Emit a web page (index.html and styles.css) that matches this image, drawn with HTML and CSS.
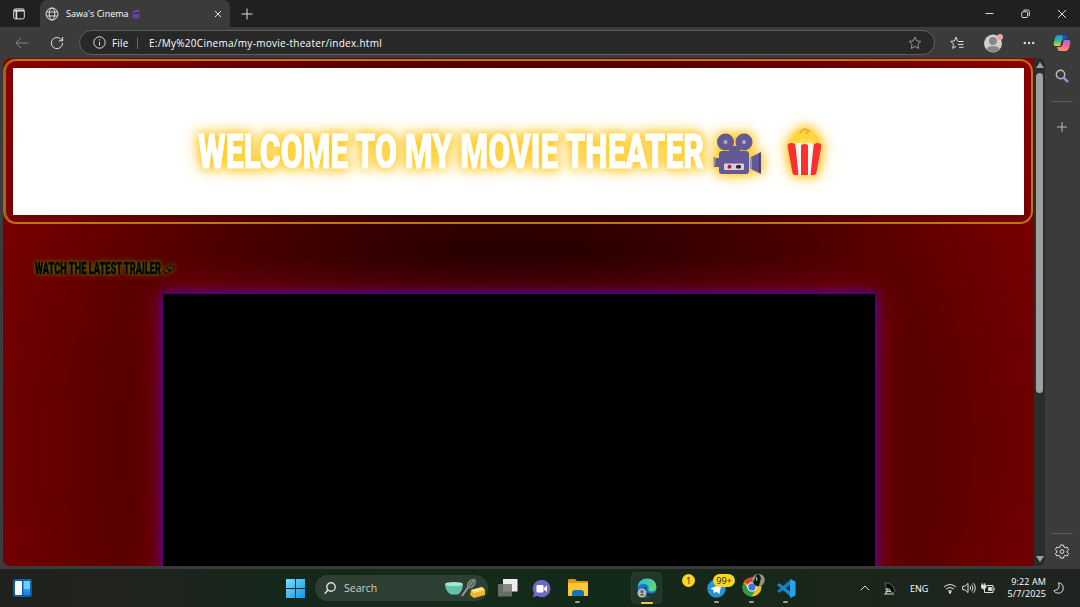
FILE: index.html
```
<!DOCTYPE html>
<html lang="en">

<head>
    <meta charset="UTF-8">
    <meta name="viewport" content="width=device-width, initial-scale=1.0">
    <title>Sawa's Cinema</title>
    <link rel="stylesheet" href="styles.css">
</head>

<body>
    <div class="titlebar">
        <svg class="workspaces" width="12" height="12" viewBox="0 0 12 12"><rect x=".7" y=".9" width="10.6" height="10" rx="1.6" class="line"/><path d="M1 2.6h10M3.4 3v8" class="line thick"/></svg>
        <div class="tab">
            <svg width="14" height="14" viewBox="0 0 14 14"><g class="line"><circle cx="7" cy="7" r="6"/><ellipse cx="7" cy="7" rx="2.8" ry="6"/><path d="M1.5 5h11M1.5 9h11"/></g></svg>
            <span class="tab-title">Sawa's Cinema</span>
            <svg class="tab-emoji" width="8" height="10" viewBox="0 0 8 10"><path d="M.5 2.5L7 .5v2L1 4z" fill="#7650a8"/><path d="M.5 3.500h7v6h-7z" fill="#65439a"/><path d="M1 4.2h6" stroke="#32215a"/></svg>
            <svg class="tab-close" width="8" height="8" viewBox="0 0 8 8"><path d="M1 1l6 6M7 1L1 7" class="line"/></svg>
        </div>
        <svg class="new-tab" width="12" height="12" viewBox="0 0 12 12"><path d="M6 .5v11M.5 6h11" class="line"/></svg>
        <div class="window-buttons">
            <svg width="9" height="10" viewBox="0 0 9 10"><path d="M.5 4.500h8" class="line"/></svg>
            <svg width="9" height="10" viewBox="0 0 9 10"><g class="line"><rect x=".8" y="2.7" width="5.8" height="5.8" rx="1"/><path d="M2.5 1h4.3Q8.3 1 8.3 2.6V7"/></g></svg>
            <svg width="10" height="10" viewBox="0 0 10 10"><path d="M1 1l8 8M9 1L1 9" class="line"/></svg>
        </div>
    </div>

    <div class="toolbar">
        <svg class="back" width="14" height="12" viewBox="0 0 14 12"><path d="M13.5 6H1M6 1L1 6l5 5" class="line"/></svg>
        <svg class="reload" width="14" height="14" viewBox="0 0 14 14"><path d="M12.5 7A5.6 5.6 0 1 1 10.6 2.9L12.5 4.6M12.6 1v3.8H8.8" class="line"/></svg>
        <div class="address">
            <svg width="13" height="13" viewBox="0 0 13 13"><circle cx="6.5" cy="6.5" r="5.7" class="line"/><path d="M6.5 5.7v3.8M6.5 3.3v1.2" class="line"/></svg>
            <span class="scheme">File</span>
            <span class="url">E:/My%20Cinema/my-movie-theater/index.html</span>
            <svg class="star" width="14" height="14" viewBox="0 0 14 14"><path d="M7 1l1.8 3.9 4.2.5-3.1 2.9.8 4.2L7 10.4l-3.7 2.1.8-4.2L1 5.4l4.2-.5z" class="line"/></svg>
        </div>
        <svg class="favorites" width="14" height="14" viewBox="0 0 14 14"><path d="M7.5 5.2L6 1 4.3 5 .8 5.3l2.7 3-.8 4L6 10.4M8 5.5h5.5M8 8.4h5.5M9 11.3h4.5" class="line"/></svg>
        <svg class="profile" width="20" height="20" viewBox="0 0 20 20"><circle cx="10" cy="10.5" r="9" fill="#d2d0ce"/><circle cx="10" cy="8" r="4" fill="#8a8886"/><path d="M3.5 16q1-3 6.5-3t6.5 3q-2.5 3-6.5 3t-6.500-3z" fill="#8a8886"/><circle cx="17" cy="4" r="3" fill="#f1a3a0"/></svg>
        <svg class="more" width="12" height="4" viewBox="0 0 12 4"><g fill="#ddd"><circle cx="1.8" cy="2" r="1.200"/><circle cx="6" cy="2" r="1.200"/><circle cx="10.200" cy="2" r="1.200"/></g></svg>
        <svg class="copilot" width="18" height="18" viewBox="0 0 18 18">
            <defs>
                <linearGradient id="copA" x1="0" y1="0" x2="0" y2="1"><stop offset="0" stop-color="#1b8fe8"/><stop offset=".55" stop-color="#35bf8f"/><stop offset="1" stop-color="#f4cf22"/></linearGradient>
                <linearGradient id="copB" x1="0" y1="0" x2="0" y2="1"><stop offset="0" stop-color="#a767ee"/><stop offset=".5" stop-color="#f0659a"/><stop offset="1" stop-color="#ff9a5a"/></linearGradient>
            </defs>
            <path d="M5 1h6q2 0 2.500 2l.5 2h-3Q9 5 8.500 7l-1.300 5H3Q0 12 .7 9L2 4q1-3 3-3z" fill="url(#copA)"/>
            <path d="M9 1h2.500q1.600 0 2.200 2l.6 2.200H10z" fill="#1b50c8"/>
            <path d="M13 17H7q-2 0-2.500-2L4 13h3q2 0 2.500-2l1.300-5H15q3 0 2.300 3L16 14q-1 3-3 3z" fill="url(#copB)"/>
        </svg>
    </div>

    <div class="browser">
        <div class="page">
            <header class="header">
                <div class="banner">
                    <svg width="1011" height="147" viewBox="0 0 1011 147">
                        <text class="headline" x="185" y="99.500" textLength="506" lengthAdjust="spacingAndGlyphs">WELCOME TO MY MOVIE THEATER</text>
                        <g class="camera">
                            <g fill="#635994">
                                <circle cx="712.500" cy="74" r="8.500"/><circle cx="731" cy="74" r="8.500"/>
                                <path d="M717 78h9l2 7h-13z"/>
                                <rect x="706" y="83" width="30" height="23" rx="3"/>
                                <path d="M738 89l10-5v22l-10-5zM701 90h5v9h-5z"/>
                            </g>
                            <path d="M701.500 89v9M738 90v11" stroke="#998eab" stroke-width="2"/>
                            <path d="M746.800 85v20" stroke="#433b6b" stroke-width="1.500"/>
                            <circle cx="712.500" cy="74" r="2" fill="#b4acbc"/><circle cx="731" cy="74" r="2" fill="#b4acbc"/>
                            <rect x="711" y="95.500" width="20" height="6.500" rx="1" fill="#d3d3d3"/>
                            <circle cx="716.500" cy="98.800" r="2" fill="#ca0b4a"/><rect x="723" y="97" width="5" height="3.500" rx="1.500" fill="#321b41"/>
                        </g>
                        <g class="popcorn">
                            <path d="M775 80q-1-6 4-7 0-5 5-8 2-4 6-4 3-2 5 0 5 1 6 5 5 2 4 7 4 2 2 7z" fill="#fcd53f"/>
                            <path d="M779 74q4-4 7 0 3-5 7-1 3-4 6 0 5-2 5 3l-2 4h-23z" fill="#ffdf4f"/>
                            <path d="M787 65l4-4 5 2-3 3" fill="none" stroke="#e0ac3a" stroke-width="1.500"/>
                            <path d="M774.500 78q0-3 4-3 3 0 4 1.500 1-1.500 4.500-1.500t4.500 1.500q1-1.500 4.500-1.500t4.500 1.500q1-1.500 4-1.500 5 0 4.500 3l-5 27q-.5 2-2.500 2h-19q-2 0-2.500-2z" fill="#f4f4f4"/>
                            <path d="M774.500 78q0-3 4-3t4 3l3 29h-3.500q-2 0-2.500-2zM788 78q0-2 3.500-2t3.500 2v29h-7zM800.500 78q0-3 4-3t4 3l-5 27q-.5 2-2.500 2h-3.500z" fill="#f8312f"/>
                        </g>
                    </svg>
                </div>
            </header>
            <main>
                <h2 class="trailer-title">
                    <svg width="180" height="24" viewBox="0 0 180 24">
                        <text x="5" y="17" textLength="126" lengthAdjust="spacingAndGlyphs">WATCH THE LATEST TRAILER</text>
                        <path d="M133 14.500l7-6.500 5 2-7 6.500zM136.500 11.500l4.500 2M138 15l3-5" fill="none" stroke="#050500"/>
                    </svg>
                </h2>
                <div class="video"></div>
            </main>
        </div>
        <div class="scrollbar">
            <div class="arrow-up"></div>
            <div class="thumb"></div>
            <div class="arrow-down"></div>
        </div>
        <div class="sidebar">
            <svg width="14" height="14" viewBox="0 0 14 14"><circle cx="5.500" cy="5.500" r="4.200" fill="none" stroke="#bcbcbc" stroke-width="1.400"/><path d="M8.800 8.800l3.500 3.500" stroke="#a58be0" stroke-width="2.400" stroke-linecap="round"/></svg>
            <div class="divider"></div>
            <svg class="side-add" width="10" height="10" viewBox="0 0 10 10"><path d="M5 0v10M0 5h10" stroke="#bbb"/></svg>
            <div class="divider bottom"></div>
            <svg class="gear" width="14" height="15" viewBox="0 0 14 15"><path d="M5.500 1h3l.5 2 1.200.7 2-.6 1.400 2.500L12.100 7v1.200l1.500 1.300-1.400 2.500-2-.6-1.200.7-.5 2h-3l-.5-2-1.200-.7-2 .6L.4 9.500 1.900 8.200V7L.4 5.600l1.400-2.500 2 .6L5 3z" class="line"/><circle cx="7" cy="7.600" r="1.900" class="line"/></svg>
        </div>
    </div>

    <div class="taskbar">
        <svg class="widgets" width="19" height="18" viewBox="0 0 19 18"><rect width="19" height="18" rx="2" fill="#0d5da8"/><rect x="2" y="2" width="7" height="14" rx="1" fill="#f5f8fb"/><rect x="10.500" y="2" width="6.500" height="8" fill="#6ad0fb"/><rect x="10.500" y="10" width="6.500" height="3" fill="#2499ea"/><rect x="10.500" y="13" width="6.500" height="3" fill="#1289f4"/></svg>
        <svg class="start" width="19" height="19" viewBox="0 0 19 19">
            <defs><linearGradient id="win" x1="0" y1="0" x2="1" y2="1"><stop offset="0" stop-color="#7adcfc"/><stop offset="1" stop-color="#1195e8"/></linearGradient></defs>
            <path d="M0 0h9v9H0zM10 0h9v9h-9zM0 10h9v9H0zM10 10h9v9h-9z" fill="url(#win)"/>
        </svg>
        <div class="search">
            <svg width="12" height="13" viewBox="0 0 12 13"><circle cx="7" cy="5" r="4.200" fill="none" stroke="#ddd" stroke-width="1.400"/><path d="M4 8l-3.300 3.700" stroke="#ddd" stroke-width="1.500"/></svg>
            <span>Search</span>
            <svg class="cooking" width="42" height="20" viewBox="0 0 42 20"><path d="M1 6h18q0 7-5 10.500H7Q1 13 1 6z" fill="#62c3a5"/><ellipse cx="10" cy="6" rx="9" ry="2" fill="#a6e6d2"/><path d="M18 18l7-10" stroke="#999" stroke-width="2"/><ellipse cx="27.500" cy="5.500" rx="3" ry="5" transform="rotate(38 27.500 5.500)" fill="#59635e" stroke="#9a9f9c"/><path d="M25 8l5-6" stroke="#aaa"/><path d="M27 12l11-3 3 3v5l-11 3-4-3z" fill="#eeb42f"/><path d="M27 12l11-3 3 3-11 3z" fill="#ffe07c"/></svg>
        </div>
        <svg class="taskview" width="20" height="18" viewBox="0 0 20 18"><rect x="5" width="14.500" height="12.500" fill="#eee"/><rect y="5" width="14" height="12.500" fill="#777" opacity=".85"/></svg>
        <svg class="chat" width="19" height="19" viewBox="0 0 19 19"><path d="M9.500 1a8.600 8.600 0 1 1-4 16L.8 18.300 2 14A8.600 8.600 0 0 1 9.500 1z" fill="#6f68c8"/><rect x="4.500" y="6" width="7" height="7.500" rx="1" fill="#fff"/><path d="M12 9l3-2.500v6.500l-3-2.500z" fill="#fff"/></svg>
        <div class="app explorer">
            <svg width="20" height="18" viewBox="0 0 20 18"><path d="M0 1q0-1 1-1h6l2 2H19q1 0 1 1v5H0z" fill="#dc9a17"/><path d="M0 4h20v12q0 1-1 1H1q-1 0-1-1z" fill="#fcc934"/><path d="M4 17v-3q0-3 3-3h6q3 0 3 3v3z" fill="#1675b8"/></svg>
        </div>
        <div class="app edge">
            <svg width="20" height="20" viewBox="0 0 20 20">
                <defs><linearGradient id="edgeG" x1="0" y1="0" x2="1" y2=".4"><stop offset="0" stop-color="#2eb5e6"/><stop offset="1" stop-color="#5bd778"/></linearGradient></defs>
                <circle cx="10" cy="10" r="9.500" fill="#1678c4"/>
                <path d="M.5 9Q2 .5 10 .5q9 0 9.500 8.500-.5 4.500-5 4.500-4 0-3-2.500 1-4-4-5Q3 5.500.5 9z" fill="url(#edgeG)"/>
                <path d="M9 8.500q-1.500 6.500 4.500 7 3 0 5.500-1.500l1 1v5h-8Q7 18 7 12.500 7.300 10 9 8.500z" fill="#22362a"/>
                <path d="M8.500 8.500q-2.500 5 1 8.500 2.500 2.200 5.500 1.200-3 1.600-6 1.300Q5 17 5.500 12.500 6.300 9.500 8.500 8.500z" fill="#145196"/>
                <circle cx="5" cy="15" r="4.500" fill="#bbb"/><circle cx="5" cy="13.700" r="1.700" fill="#666"/><path d="M2.500 17q2.500-2.500 5 0l-2.500 1z" fill="#666"/>
            </svg>
        </div>
        <div class="app empty"><span class="badge one">1</span></div>
        <div class="app telegram">
            <svg width="19" height="19" viewBox="0 0 19 19"><circle cx="9.500" cy="9.500" r="9.300" fill="#2492d8"/><path d="M3.500 9.500l11-4.500-2 10-3.500-2.500-2 2-.5-3.500z" fill="#fff"/></svg>
            <span class="badge count">99+</span>
        </div>
        <div class="app chrome">
            <svg width="24" height="24" viewBox="0 0 24 24"><circle cx="10" cy="14" r="9.500" fill="#f2bf22"/><path d="M10 14L1.800 9.200A9.500 9.500 0 0 1 18.300 9.300z" fill="#df4134"/><path d="M1.800 9.200A9.500 9.500 0 0 0 9.600 23.500L14 16 6 16z" fill="#269c4c"/><circle cx="10" cy="14" r="4.700" fill="#fff"/><circle cx="10" cy="14" r="3.700" fill="#3a78dd"/><circle cx="16.500" cy="7" r="6.300" fill="#8a9874"/><path d="M11 9q2-2 3-7l3-1 2 4-2 8q-4 1-6-4z" fill="#15191a"/><path d="M14 4l1 2-.5 1.500" fill="none" stroke="#ddd"/></svg>
        </div>
        <div class="app vscode">
            <svg width="20" height="19" viewBox="0 0 20 19"><path d="M14 1L1 12l2 2L16 5z" fill="#1579bd"/><path d="M1 6l2-2 12 9v5z" fill="#1688d0"/><path d="M14 0l5.500 2.500v14L14 19z" fill="#29a0ec"/></svg>
        </div>
        <div class="tray">
            <svg class="chevron" width="10" height="6" viewBox="0 0 10 6"><path d="M.8 5.200L5 1l4.200 4.200" class="line"/></svg>
            <svg class="dish" width="13" height="13" viewBox="0 0 13 13"><path d="M2 1q7-1 10 8-1 3-4 1Q3 8 2 1z" fill="#050505" stroke="#777" stroke-width=".8"/><path d="M2 7l4 0 2 3M3 12l1.500-5M1 12h10M2.500 9.500h5" fill="none" stroke="#ccc" stroke-width="1.200"/></svg>
            <span class="lang">ENG</span>
            <svg class="wifi" width="14" height="11" viewBox="0 0 14 11"><path d="M1 4q6-5 12 0M3 6.200q4-3.200 8 0M5 8.300q2-1.500 4 0" class="line"/><circle cx="7" cy="9.500" r="1.200" fill="#ddd"/></svg>
            <svg class="volume" width="14" height="12" viewBox="0 0 14 12"><path d="M.7 4.200H3L6 1.400v9.200L3 7.800H.7zM8 4.200q1.300 1.800 0 3.600M9.800 2.700q2.300 3.300 0 6.600M11.600 1.200q3.300 4.800 0 9.600" class="line"/></svg>
            <svg class="battery" width="14" height="11" viewBox="0 0 14 11"><path d="M6 2.500h6v7H3.500V6" class="line"/><path d="M7.500 4.500h3v3h-3zM13.200 4.500v3" fill="#ddd" stroke="#ddd" stroke-width=".8"/><path d="M0 2h5v2.500L3.500 6H2L0 4.500zM1.300 0v2M3.700 0v2" fill="#ddd" stroke="#ddd" stroke-width=".8"/></svg>
            <div class="clock"><span>9:22 AM</span><span>5/7/2025</span></div>
            <svg class="moon" width="11" height="12" viewBox="0 0 11 12"><path d="M5.500.8q4.700.7 4.700 5.200 0 5-5 5.200-3 0-4.400-2.200 5.200-1.500 5.300-4Q6.200 3 5.500.8z" class="line"/></svg>
        </div>
    </div>
</body>

</html>
```

FILE: styles.css
```
* {
    box-sizing: border-box;
}

body {
    margin: 0;
    width: 1080px;
    height: 607px;
    overflow: hidden;
    display: flex;
    flex-direction: column;
    background: #3b3b3b;
    color: #e6e6e6;
    font-family: "Open Sans", "Noto Sans", sans-serif;
    font-size: 10px;
}

svg {
    display: block;
    flex: none;
}

.line {
    fill: none;
    stroke: #dedede;
    stroke-width: 1;
}

.thick {
    stroke-width: 1.6;
}

/* browser window */
.titlebar {
    height: 27px;
    flex: none;
    display: flex;
    align-items: center;
    background: #202020;
}

.workspaces {
    margin-left: 13px;
}

.tab {
    width: 190px;
    height: 27px;
    margin-left: 15px;
    padding: 0 8px 0 5px;
    display: flex;
    align-items: center;
    background: #3b3b3b;
    border-radius: 7px 7px 0 0;
}

.tab-title {
    width: 63px;
    margin-left: 7px;
    font-size: 9px;
    letter-spacing: 0.02px;
    white-space: nowrap;
    color: #fff;
}

.tab-emoji {
    margin-left: 3px;
}

.tab-close {
    margin-left: auto;
}

.new-tab {
    margin-left: 11px;
}

.window-buttons {
    margin-left: auto;
    margin-right: 13px;
    display: flex;
    gap: 27px;
}

.toolbar {
    height: 31px;
    flex: none;
    display: flex;
    align-items: center;
    background: #3b3b3b;
}

.back {
    margin-left: 15px;
    opacity: 0.45;
}

.reload {
    margin-left: 21px;
}

.address {
    width: 856px;
    height: 25px;
    margin-left: 15px;
    padding: 0 12px 0 13px;
    display: flex;
    align-items: center;
    background: #282828;
    border: 1px solid #5e5e5e;
    border-radius: 13px;
}

.scheme {
    width: 26px;
    margin-left: 6px;
    border-right: 1px solid #666;
    line-height: 12px;
    color: #fff;
    letter-spacing: 0.15px;
}

.url {
    margin-left: 11px;
    font-size: 10px;
    color: #fff;
    letter-spacing: 0.28px;
}

.star {
    margin-left: auto;
    opacity: 0.6;
}

.favorites {
    margin-left: 15px;
}

.profile {
    margin-left: 19px;
}

.more {
    margin-left: 20px;
}

.copilot {
    margin-left: 18px;
}

.browser {
    height: 509px;
    flex: none;
    display: flex;
    padding-left: 3px;
}

/* cinema page */
.page {
    width: 1031px;
    height: 508px;
    padding: 1px;
    overflow: hidden;
    border-radius: 8px 0 0 7px;
    background: radial-gradient(circle 643px at 515px 386px, #000, #8b0000);
}

.header {
    height: 165px;
    padding: 7px;
    margin-left: -1px;
    border: 2px solid #bd7516;
    border-left-width: 3px;
    border-left-color: #a86413;
    border-radius: 13px;
}

.banner {
    width: 1011px;
    height: 147px;
    background: #fff;
}

.headline {
    font-family: Roboto, "Liberation Sans", sans-serif;
    font-size: 48.5px;
    font-weight: 900;
    fill: #fff;
    stroke: #fff;
    stroke-width: 0.8px;
}

.banner svg {
    filter: drop-shadow(0 0 4px #ffce1c) drop-shadow(0 0 7px rgba(255, 196, 30, 0.9));
}

.trailer-title {
    margin: 33px 0 0 26px;
}

.trailer-title svg {
    overflow: visible;
    filter: drop-shadow(0 0 1.5px #5b5700) drop-shadow(0 0 2px #5b5000);
}

.trailer-title text {
    font-family: Roboto, "Liberation Sans", sans-serif;
    font-size: 16px;
    font-weight: 900;
    fill: #050500;
    stroke: #050500;
    stroke-width: 0.4px;
}

.video {
    width: 712px;
    height: 400px;
    margin: 13px auto 0 159px;
    background: #000;
    box-shadow: 0 0 10px 1px #4600c8, 0 0 40px 2px rgba(150, 0, 25, 0.95);
}

.scrollbar {
    width: 11px;
    height: 508px;
    display: flex;
    flex-direction: column;
    align-items: center;
    background: #2c2c2c;
    border-radius: 0 6px 6px 0;
}

.arrow-up,
.arrow-down {
    border: 4px solid transparent;
}

.arrow-up {
    border-bottom: 6px solid #9f9f9f;
}

.thumb {
    width: 7px;
    height: 320px;
    margin-top: 5px;
    border-radius: 4px;
    background: #9f9f9f;
}

.arrow-down {
    margin-top: auto;
    border-top: 6px solid #9f9f9f;
}

.sidebar {
    width: 34px;
    display: flex;
    flex-direction: column;
    align-items: center;
    padding: 11px 0 8px;
}

.divider {
    width: 22px;
    height: 1px;
    margin-top: 18px;
    background: #5c5c5c;
}

.side-add {
    margin-top: 20px;
}

.divider.bottom {
    margin-top: auto;
}

.gear {
    margin-top: 10px;
}

/* taskbar */
.taskbar {
    height: 40px;
    flex: none;
    display: flex;
    align-items: center;
    border-top: 2px solid #3a3a3a;
    background: linear-gradient(90deg, #20211e 0, #20231e 130px, #15271b 270px, #142b1a 460px, #12291a 620px, #182718 780px, #1b261b 880px, #202421);
}

.widgets {
    margin-left: 13px;
}

.start {
    margin-left: 254px;
}

.search {
    width: 173px;
    height: 26px;
    margin-left: 10px;
    padding: 0 2px 0 9px;
    display: flex;
    align-items: center;
    border-radius: 13px;
    background: #2d3f32;
    font-size: 10.5px;
    color: #ccd0cd;
}

.search span {
    margin-left: 8px;
}

.cooking {
    margin-left: auto;
}

.taskview {
    margin-left: 10px;
}

.chat {
    margin-left: 14px;
}

.app {
    position: relative;
    width: 31px;
    height: 32px;
    display: flex;
    align-items: center;
    justify-content: center;
    border-radius: 4px;
}

.app::after {
    content: "";
    position: absolute;
    bottom: 1px;
    width: 5px;
    height: 2px;
    border-radius: 1px;
    background: #999e99;
}

.explorer {
    margin-left: 11px;
}

.edge {
    margin-left: 38px;
    background: #22362a;
    border: 1px solid #293c30;
}

.edge::after {
    bottom: -1px;
    width: 12px;
    background: #f5c843;
}

.empty {
    margin-left: 4px;
}

.empty::after {
    display: none;
}

.badge {
    position: absolute;
    height: 13px;
    border-radius: 7px;
    background: #fbd51f;
    color: #222;
    font-size: 9px;
    line-height: 13px;
    text-align: center;
}

.one {
    top: 2px;
    right: 2px;
    width: 13px;
}

.telegram {
    margin-left: 4px;
}

.count {
    top: 2px;
    left: 12px;
    width: 22px;
}

.chrome {
    margin-left: 4px;
}

.chrome svg {
    margin: -6px 0 0 4px;
}

.vscode {
    margin-left: 3px;
}

.tray {
    margin-left: auto;
    margin-right: 16px;
    display: flex;
    align-items: center;
    font-size: 9px;
    color: #fff;
}

.dish {
    margin-left: 13px;
}

.lang {
    width: 19px;
    margin-left: 14px;
}

.wifi {
    margin-left: 14px;
}

.volume {
    margin-left: 5px;
}

.battery {
    margin-left: 5px;
}

.clock {
    width: 41px;
    margin-left: 10px;
    display: flex;
    flex-direction: column;
    align-items: flex-end;
    line-height: 12.5px;
    letter-spacing: 0.12px;
    white-space: nowrap;
}

.moon {
    margin-left: 7px;
}
```
